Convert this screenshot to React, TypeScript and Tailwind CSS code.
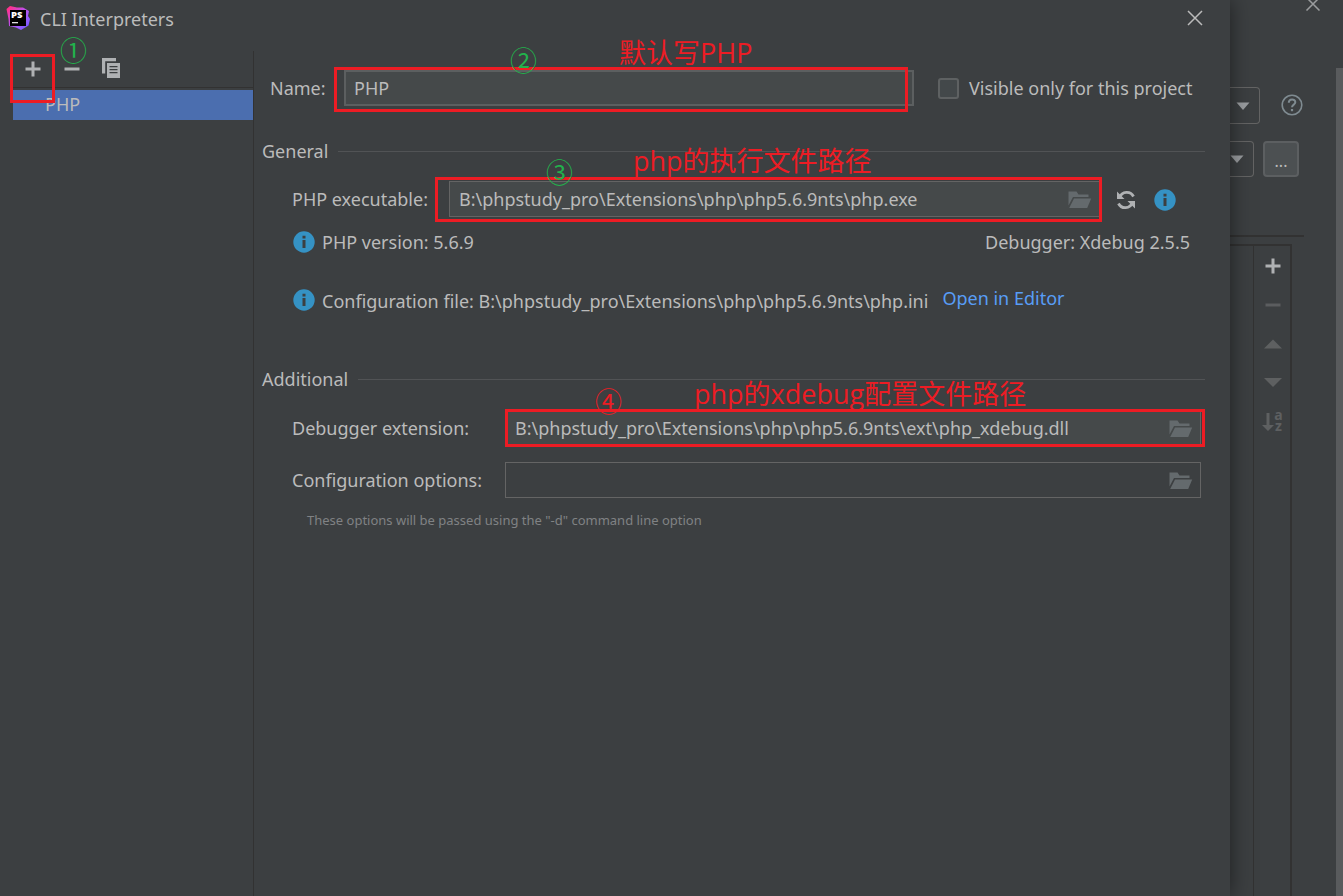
import type { ReactNode } from "react";

function AppLogo() {
  return (
    <svg viewBox="0 0 24 24" className="mt-px size-6 shrink-0" aria-hidden="true">
      <defs>
        <linearGradient id="logo" x1="0" y1="0" x2="1" y2="1">
          <stop offset="0.1" stopColor="#ff318c" />
          <stop offset="0.4" stopColor="#c64ae0" />
          <stop offset="0.65" stopColor="#a35cff" />
          <stop offset="0.95" stopColor="#6b57ff" />
        </linearGradient>
      </defs>
      <path d="M0.500 3 L4 0 L11 1.500 L17 1.500 L23 5 L22 10 L24 13 L22.500 19.500 L15 24 L10 21.500 L3 20 L2.500 13 Z" fill="url(#logo)" />
      <rect x="4" y="4" width="16" height="16" fill="#000" />
      <text x="5" y="12" fontSize="9.500" fontWeight="800" fill="#fff" fontFamily="Open Sans, sans-serif">PS</text>
      <rect x="6" y="16" width="6" height="1.300" fill="#ddd" />
    </svg>
  );
}

function CloseIcon() {
  return (
    <svg viewBox="0 0 16 16" className="size-4" fill="none" stroke="#bbbbbb" strokeWidth="1.5">
      <path d="M1 1 L15 15 M15 1 L1 15" />
    </svg>
  );
}

function PlusIcon() {
  return (
    <svg viewBox="0 0 16 16" className="size-4" fill="#afb1b3">
      <path d="M6.5 0.5h3v6h6v3h-6v6h-3v-6h-6v-3h6z" />
    </svg>
  );
}

function MinusIcon({ color }: { color: string }) {
  return (
    <svg viewBox="0 0 16 16" className="size-4" fill={color}>
      <rect x="0.5" y="6.5" width="15" height="3" />
    </svg>
  );
}

function CopyIcon() {
  return (
    <svg viewBox="0 0 20 20" className="size-5" fill="#afb1b3">
      <path d="M1 0h14v3.200H4.200v12.300H1z" />
      <path fillRule="evenodd" d="M6 5h13v15H6z M8.500 8v1.300h8V8z M8.500 11v1.300h8V11z M8.500 14v1.300h8V14z" />
    </svg>
  );
}

function FolderIcon() {
  return (
    <svg viewBox="0 0 24 18" className="h-[18px] w-6" fill="#646a6d">
      <path d="M0.500 0.500h8l2 3h10v2.600H5L0.500 14.500z" />
      <path d="M6 7.500h17.200L19.200 17H1.200z" />
    </svg>
  );
}

function InfoIcon() {
  return (
    <svg viewBox="0 0 22 22" className="size-[22px] shrink-0" aria-hidden="true">
      <circle cx="11" cy="11" r="10.700" fill="#3592c4" />
      <path d="M9.500 4.800h3v2.700h-3z M9.500 9h3v8h-3z" fill="#3c3f41" />
    </svg>
  );
}

function RefreshIcon() {
  return (
    <svg viewBox="0 0 20 20" className="size-5" fill="none" stroke="#afb1b3" strokeWidth="2.800">
      <path d="M3.500 7.500 C6 1 14.500 0.500 17.500 6.500" />
      <path d="M16.500 12.500 C14 19 5.500 19.500 2.500 13.500" />
      <path d="M1 1.500v7.500h7.500z M19 18.500V11h-7.500z" fill="#afb1b3" stroke="none" />
    </svg>
  );
}

function Marker({ children, className }: { children: ReactNode; className: string }) {
  return (
    <span className={`pointer-events-none absolute z-10 whitespace-nowrap font-['Open_Sans','Noto_Sans_CJK_SC',sans-serif] text-[27px] leading-8 ${className}`}>
      {children}
    </span>
  );
}

function Frame({ className }: { className: string }) {
  return <div className={`pointer-events-none absolute border-3 border-[#ed1c24] ${className}`} />;
}

function SectionTitle({ children }: { children: ReactNode }) {
  return (
    <div className="flex h-8 items-center gap-[10px]">
      <h2>{children}</h2>
      <div className="h-px flex-1 bg-[#515355]" />
    </div>
  );
}

function PathField({ id, value, filled }: { id: string; value: string; filled: boolean }) {
  return (
    <div className={`flex h-9 min-w-0 flex-1 items-center border border-[#646464] pr-[7px] pl-[9px] ${filled ? "bg-[#45494a]" : ""}`}>
      <input id={id} defaultValue={value} className="min-w-0 flex-1 bg-transparent outline-none" />
      <button aria-label="Browse" className="pt-[2px]"><FolderIcon /></button>
    </div>
  );
}

function DropDown({ label, className }: { label: string; className: string }) {
  return (
    <div className={`relative flex items-center justify-end rounded-r border border-l-0 border-[#646464] ${className}`}>
      <select aria-label={label} className="absolute inset-0 appearance-none bg-transparent outline-none" />
      <svg viewBox="0 0 14 8" className="h-2 w-[14px]" fill="#9a9da0"><path d="M0.500 0.500h13L7 8z" /></svg>
    </div>
  );
}

function Sidebar() {
  return (
    <aside className="w-[254px] shrink-0 border-r border-[#323232] pl-[13px]">
      <div className="relative flex h-9 items-center gap-[23px] pl-3">
        <button aria-label="Add"><PlusIcon /></button>
        <button aria-label="Remove"><MinusIcon color="#afb1b3" /></button>
        <button aria-label="Copy" className="-ml-[2px] pb-[2px]"><CopyIcon /></button>
        <Frame className="top-[3px] -left-[3px] z-10 h-[49px] w-[45px]" />
        <Marker className="-top-4 left-[47px] text-[#22b14c]">①</Marker>
      </div>
      <div className="mb-[2px] h-px bg-[#323232]" />
      <ul>
        <li className="flex h-[30px] items-center bg-[#4b6eaf] pb-[2px] pl-8">PHP</li>
      </ul>
    </aside>
  );
}

function Settings() {
  return (
    <main className="min-w-0 flex-1 pt-[18px] pr-[25px] pl-2">
      <div className="relative flex h-[38px] items-center pr-[6px] pl-2">
        <label htmlFor="name" className="w-[74px]">Name:</label>
        <input id="name" defaultValue="PHP" className="h-9 min-w-0 flex-1 border-2 border-[#5c5f60] bg-[#45494a] px-2 outline-none" />
        <label className="ml-6 flex items-center gap-[10px] whitespace-nowrap">
          <input type="checkbox" className="size-[21px] appearance-none rounded-[3px] border-2 border-[#5e6162] bg-[#43484a]" />
          <span className="w-[230px]">Visible only for this project</span>
        </label>
        <Frame className="-top-[2px] right-[297px] left-[72px] h-[45px]" />
        <Marker className="-top-6 left-[248px] text-[#22b14c]">②</Marker>
        <Marker className="-top-8 left-[357px] text-[#ed1c24]">默认写PHP</Marker>
      </div>

      <section className="mt-7">
        <SectionTitle>General</SectionTitle>
        <div className="relative mt-[14px] flex h-9 items-center pl-[30px]">
          <label htmlFor="executable" className="w-[157px]">PHP executable:</label>
          <PathField id="executable" value="B:\phpstudy_pro\Extensions\php\php5.6.9nts\php.exe" filled />
          <button aria-label="Reload" className="ml-4 pt-[2px]"><RefreshIcon /></button>
          <button aria-label="Details" className="mr-[29px] ml-[18px] pt-[2px]"><InfoIcon /></button>
          <Frame className="-top-1 right-[103px] left-[173px] h-[45px]" />
          <Marker className="-top-6 left-[284px] text-[#22b14c]">③</Marker>
          <Marker className="-top-9 left-[371px] text-[#ed1c24]">php的执行文件路径</Marker>
        </div>
        <div className="mt-[7px] flex h-9 items-center gap-[7px] pr-[15px] pl-[31px]">
          <InfoIcon />
          <p className="flex-1">PHP version: 5.6.9</p>
          <p>Debugger: Xdebug 2.5.5</p>
        </div>
        <div className="mt-[22px] flex h-9 items-center gap-[7px] pl-[31px] whitespace-nowrap">
          <InfoIcon />
          <p className="pt-[2px]">Configuration file: B:\phpstudy_pro\Extensions\php\php5.6.9nts\php.ini</p>
          <a href="#editor" className="ml-[7px] pb-1 text-[#589df6]">Open in Editor</a>
        </div>
      </section>

      <section className="mt-[45px]">
        <SectionTitle>Additional</SectionTitle>
        <div className="relative mt-[15px] flex h-9 items-center pr-1 pl-[30px]">
          <label htmlFor="extension" className="w-[213px]">Debugger extension:</label>
          <PathField id="extension" value="B:\phpstudy_pro\Extensions\php\php5.6.9nts\ext\php_xdebug.dll" filled />
          <Frame className="-top-px right-0 left-[243px] h-[38px]" />
          <Marker className="-top-6 left-[333px] text-[#ed1c24]">④</Marker>
          <Marker className="-top-8 left-[432px] text-[#ed1c24]">php的xdebug配置文件路径</Marker>
        </div>
        <div className="mt-4 flex h-9 items-center pr-1 pl-[30px]">
          <label htmlFor="options" className="w-[213px]">Configuration options:</label>
          <PathField id="options" value="" filled={false} />
        </div>
        <p className="mt-3 pl-[45px] text-[13px] leading-5 text-[#808284]">These options will be passed using the "-d" command line option</p>
      </section>
    </main>
  );
}

function ParentWindow() {
  return (
    <div className="flex w-[113px] shrink-0 flex-col overflow-hidden">
      <div className="flex h-[87px] justify-end pr-[22px]">
        <button aria-label="Close settings" className="h-[11px]">
          <svg viewBox="0 0 16 11" className="h-[11px] w-4" fill="none" stroke="#9a9c9e" strokeWidth="1.500">
            <path d="M3 -1 L14.500 10.500 M13 -1 L1.500 10.500" />
          </svg>
        </button>
      </div>
      <div className="flex flex-1 flex-col">
        <div className="flex items-center gap-[21px]">
          <DropDown label="Language level" className="h-[37px] w-[30px] pr-[9px]" />
          <button aria-label="Help" className="pb-[2px]">
            <svg viewBox="0 0 22 22" className="size-[22px]" fill="none" stroke="#7f8b91" strokeWidth="1.600">
              <circle cx="11" cy="11" r="9.800" />
              <path d="M7.800 8.800 C7.800 4.300 14.300 4.500 14.300 8.300 C14.300 10.700 11 10.500 11 13.300" strokeWidth="2" />
              <path d="M11 15v2.200" strokeWidth="2.200" />
            </svg>
          </button>
        </div>
        <div className="mt-[17px] flex items-center gap-[9px]">
          <DropDown label="Interpreter" className="h-9 w-6 pr-[9px]" />
          <button className="h-9 w-9 rounded border-2 border-[#5c5f61] bg-[#4c5052] pt-1 text-base leading-7">...</button>
        </div>
        <div className="mt-[58px] mr-[39px] h-[2px] bg-[#323232]" />
        <div className="mt-[7px] mr-[51px] flex flex-1 border-t-2 border-r-2 border-[#323232]">
          <div className="w-6 border-r border-[#323232]" />
          <div className="flex flex-1 flex-col items-center gap-[23px] pt-3 pl-px">
            <button aria-label="Add path"><PlusIcon /></button>
            <button aria-label="Remove path"><MinusIcon color="#5b5d5f" /></button>
            <button aria-label="Move up">
              <svg viewBox="0 0 18 16" className="h-4 w-[18px]" fill="#5e6061"><path d="M0 12.500h18L9 3.500z" /></svg>
            </button>
            <button aria-label="Move down">
              <svg viewBox="0 0 18 16" className="h-4 w-[18px]" fill="#5e6061"><path d="M0 3h18L9 12z" /></svg>
            </button>
            <button aria-label="Sort" className="-mt-[5px] flex items-center text-[#5e6061]">
              <svg viewBox="0 0 12 20" className="h-5 w-3" fill="currentColor"><path d="M4.500 1h3v12H12L6 19L0 13h4.500z" /></svg>
              <span className="w-[9px] pb-1 text-[14px] leading-[11px] font-bold break-all">az</span>
            </button>
          </div>
        </div>
      </div>
    </div>
  );
}

export default function App() {
  return (
    <div className="flex min-h-screen bg-[#3c3f41] font-['Noto_Sans','Noto_Sans_CJK_SC',sans-serif] text-[18px] leading-7 text-[#bbbbbb]">
      <div className="relative z-10 flex min-w-0 flex-1 flex-col bg-[#3c3f41] shadow-[0_0_20px_rgba(0,0,0,0.5)]">
        <header className="flex h-[51px] items-start gap-[10px] pt-[5px] pr-[27px] pl-[6px]">
          <AppLogo />
          <h1 className="flex-1">CLI Interpreters</h1>
          <button aria-label="Close" className="pt-[5px]"><CloseIcon /></button>
        </header>
        <div className="flex flex-1">
          <Sidebar />
          <Settings />
        </div>
      </div>
      <ParentWindow />
      <div className="absolute top-[68px] right-0 bottom-0 w-[7px] bg-[#595b5d]" />
    </div>
  );
}
